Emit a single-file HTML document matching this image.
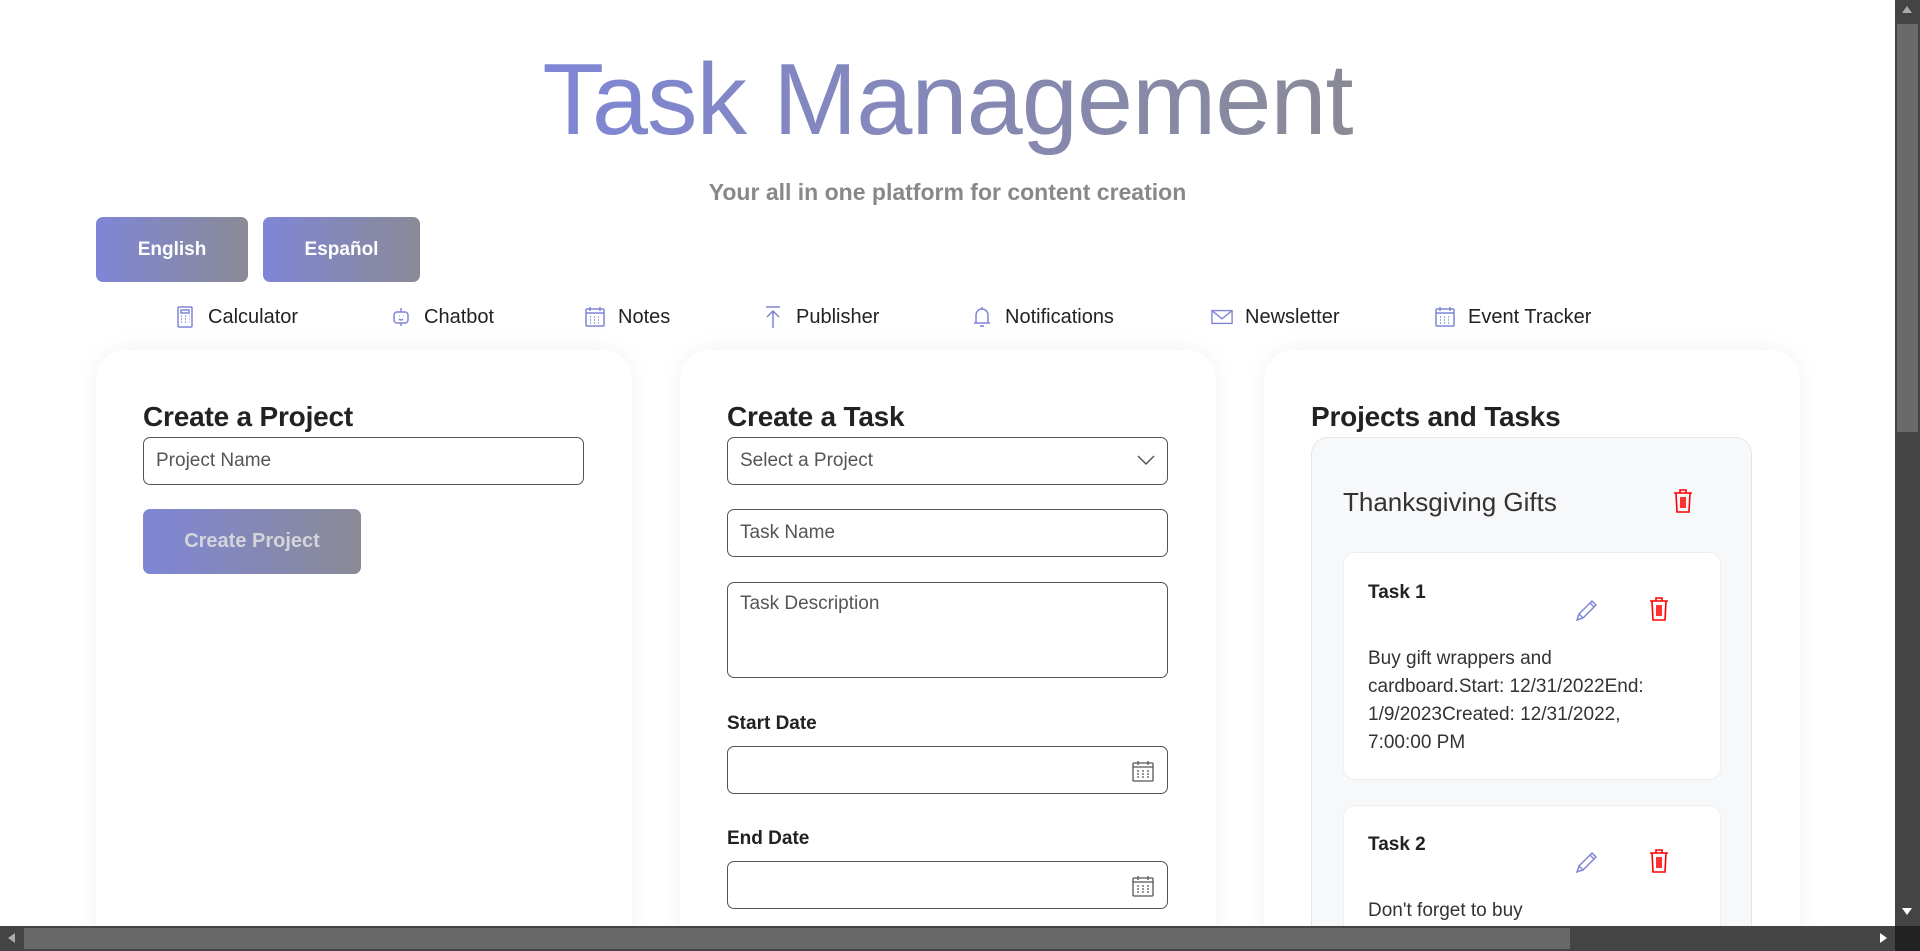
<!DOCTYPE html>
<html><head><meta charset="utf-8"><style>
*{box-sizing:border-box;margin:0;padding:0}
html,body{width:1920px;height:951px;overflow:hidden;background:#fff;font-family:"Liberation Sans",sans-serif;color:#222}
#wrap{position:relative;width:1920px;height:951px;overflow:hidden}
.abs{position:absolute}
h1{position:absolute;left:0;width:1895px;top:40px;text-align:center;font-size:101px;font-weight:400;line-height:120px;letter-spacing:-1px}
h1 span{background:linear-gradient(90deg,#7f86d6,#8a8a96);-webkit-background-clip:text;background-clip:text;color:transparent}
.sub{position:absolute;left:0;width:1895px;top:179px;text-align:center;font-size:23px;font-weight:bold;color:#888}
.btn{position:absolute;background:linear-gradient(90deg,#7f86d6,#8a8a96);border-radius:7px;color:#fff;font-weight:bold;font-size:19px;display:flex;align-items:center;justify-content:center}
.nav{position:absolute;top:305px;font-size:20px;color:#222;display:flex;align-items:center;gap:12px;height:24px}
.nav svg{width:22px;height:24px}
.card{position:absolute;top:350px;width:536px;height:640px;background:#fff;border-radius:30px;box-shadow:0 0 24px rgba(0,0,0,.06)}
.h2{position:absolute;font-size:28px;font-weight:bold;color:#222;letter-spacing:-.2px}
.inp{position:absolute;border:1px solid #555;border-radius:7px;font-size:19px;color:#555;padding-left:12px;display:flex;align-items:center;background:#fff}
.lbl{position:absolute;font-size:19px;color:#222;font-weight:bold}
.desc{font-size:19px;line-height:28px;color:#333}
</style></head><body><div id="wrap">
<h1><span>Task Management</span></h1>
<div class="sub">Your all in one platform for content creation</div>
<div class="btn" style="left:96px;top:217px;width:152px;height:65px">English</div>
<div class="btn" style="left:263px;top:217px;width:157px;height:65px">Español</div>

<div class="nav" style="left:174px"><svg viewBox="0 0 22 24" fill="none" stroke="#7f86d6" stroke-width="1.5"><rect x="4" y="2" width="14" height="20" rx="1"/><rect x="7" y="5" width="8" height="3"/><path d="M7 11h1M11 11h1M15 11h0.5M7 14h1M11 14h1M15 14h.5M7 17h1M11 17h1M15 17h.5"/></svg>Calculator</div>
<div class="nav" style="left:390px"><svg viewBox="0 0 22 24" fill="none" stroke="#7f86d6" stroke-width="1.5"><rect x="4" y="7" width="14" height="11" rx="3"/><path d="M11 3v4M9 11h.5M13 11h.5M9 14q2 2 4 0M11 18v3"/></svg>Chatbot</div>
<div class="nav" style="left:584px"><svg viewBox="0 0 22 24" fill="none" stroke="#7f86d6" stroke-width="1.5"><rect x="2" y="4" width="18" height="17" rx="1"/><path d="M2 8h18M6 2v4M16 2v4M6 12h1M10 12h1M14 12h1M6 15h1M10 15h1M14 15h1M6 18h1M10 18h1M14 18h1"/></svg>Notes</div>
<div class="nav" style="left:762px"><svg viewBox="0 0 22 24" fill="none" stroke="#7f86d6" stroke-width="1.5"><path d="M4 2h14M11 6v17M5 12l6-6 6 6"/></svg>Publisher</div>
<div class="nav" style="left:971px"><svg viewBox="0 0 22 24" fill="none" stroke="#7f86d6" stroke-width="1.5"><path d="M5 18V10a6 6 0 0 1 12 0v8M3 18h16M9 21h4M11 2v2"/></svg>Notifications</div>
<div class="nav" style="left:1211px"><svg viewBox="0 0 24 24" fill="none" stroke="#7f86d6" stroke-width="1.5"><rect x="1" y="5" width="22" height="14"/><path d="M1 5l11 9 11-9"/></svg>Newsletter</div>
<div class="nav" style="left:1434px"><svg viewBox="0 0 22 24" fill="none" stroke="#7f86d6" stroke-width="1.5"><rect x="2" y="4" width="18" height="17" rx="1"/><path d="M2 8h18M6 2v4M16 2v4M6 12h1M10 12h1M14 12h1M6 15h1M10 15h1M14 15h1M6 18h1M10 18h1M14 18h1"/></svg>Event Tracker</div>

<div class="card" style="left:96px"></div>
<div class="card" style="left:680px"></div>
<div class="card" style="left:1264px"></div>

<div class="h2" style="left:143px;top:401px">Create a Project</div>
<div class="inp" style="left:143px;top:437px;width:441px;height:48px">Project Name</div>
<div class="btn" style="left:143px;top:509px;width:218px;height:65px;color:#d4d4dc;font-size:20px">Create Project</div>

<div class="h2" style="left:727px;top:401px">Create a Task</div>
<div class="inp" style="left:727px;top:437px;width:441px;height:48px">Select a Project
<svg style="position:absolute;right:12px;top:17px" width="18" height="11" viewBox="0 0 18 11" fill="none" stroke="#555" stroke-width="1.5"><path d="M1 1l8 8 8-8"/></svg></div>
<div class="inp" style="left:727px;top:509px;width:441px;height:48px">Task Name</div>
<div class="inp" style="left:727px;top:582px;width:441px;height:96px;align-items:flex-start;padding-top:10px">Task Description</div>
<div class="lbl" style="left:727px;top:713px">Start Date</div>
<div class="inp" style="left:727px;top:746px;width:441px;height:48px"><svg style="position:absolute;right:12px;top:12px" width="24" height="24" viewBox="0 0 24 24" fill="none" stroke="#555" stroke-width="1.3"><rect x="2" y="4" width="20" height="18" rx="1"/><path d="M2 8h20M7 2v4M17 2v4M6 12h2M11 12h2M16 12h2M6 15h2M11 15h2M16 15h2M6 18h2M11 18h2M16 18h2"/></svg></div>
<div class="lbl" style="left:727px;top:828px">End Date</div>
<div class="inp" style="left:727px;top:861px;width:441px;height:48px"><svg style="position:absolute;right:12px;top:12px" width="24" height="24" viewBox="0 0 24 24" fill="none" stroke="#555" stroke-width="1.3"><rect x="2" y="4" width="20" height="18" rx="1"/><path d="M2 8h20M7 2v4M17 2v4M6 12h2M11 12h2M16 12h2M6 15h2M11 15h2M16 15h2M6 18h2M11 18h2M16 18h2"/></svg></div>

<div class="h2" style="left:1311px;top:401px">Projects and Tasks</div>
<div class="abs" style="left:1311px;top:437px;width:441px;height:600px;background:#f7f8fa;border:1px solid #e6e6e9;border-radius:17px"></div>
<div class="abs" style="left:1343px;top:487px;font-size:26px;color:#333">Thanksgiving Gifts</div>
<svg class="abs" style="left:1672px;top:488px" width="22" height="26" viewBox="0 0 22 26" fill="none" stroke="#f00" stroke-width="1.6"><path d="M2 5h18M8 5V2h6v3M4 5l1 19h12l1-19M9 9v11M11 9v11M13 9v11"/></svg>

<div class="abs" style="left:1343px;top:552px;width:378px;height:228px;background:#fff;border:1px solid #eceef0;border-radius:12px"></div>
<div class="abs" style="left:1368px;top:582px;font-size:19px;font-weight:bold;color:#222">Task 1</div>
<svg class="abs" style="left:1574px;top:597px" width="26" height="26" viewBox="0 0 26 26" fill="none" stroke="#7f86d6" stroke-width="1.5"><path d="M3 23l2-6L18 4l4 4L9 21zM5 17l4 4M16 6l4 4"/></svg>
<svg class="abs" style="left:1648px;top:596px" width="22" height="26" viewBox="0 0 22 26" fill="none" stroke="#f00" stroke-width="1.6"><path d="M2 5h18M8 5V2h6v3M4 5l1 19h12l1-19M9 9v11M11 9v11M13 9v11"/></svg>
<div class="abs desc" style="left:1368px;top:645px;width:320px">Buy gift wrappers and cardboard.Start: 12/31/2022End: 1/9/2023Created: 12/31/2022, 7:00:00 PM</div>

<div class="abs" style="left:1343px;top:805px;width:378px;height:200px;background:#fff;border:1px solid #eceef0;border-radius:12px"></div>
<div class="abs" style="left:1368px;top:834px;font-size:19px;font-weight:bold;color:#222">Task 2</div>
<svg class="abs" style="left:1574px;top:849px" width="26" height="26" viewBox="0 0 26 26" fill="none" stroke="#7f86d6" stroke-width="1.5"><path d="M3 23l2-6L18 4l4 4L9 21zM5 17l4 4M16 6l4 4"/></svg>
<svg class="abs" style="left:1648px;top:848px" width="22" height="26" viewBox="0 0 22 26" fill="none" stroke="#f00" stroke-width="1.6"><path d="M2 5h18M8 5V2h6v3M4 5l1 19h12l1-19M9 9v11M11 9v11M13 9v11"/></svg>
<div class="abs desc" style="left:1368px;top:897px">Don't forget to buy</div>

<div class="abs" style="left:1895px;top:0;width:25px;height:951px;background:#444"></div>
<div class="abs" style="left:1897px;top:24px;width:21px;height:408px;background:#6a6a6a"></div>
<div class="abs" style="left:1902px;top:6px;width:0;height:0;border-left:5px solid transparent;border-right:5px solid transparent;border-bottom:7px solid #aaa"></div>
<div class="abs" style="left:0;top:926px;width:1895px;height:25px;background:#444"></div>
<div class="abs" style="left:24px;top:928px;width:1546px;height:21px;background:#686868"></div>
<div class="abs" style="left:8px;top:933px;width:0;height:0;border-top:5px solid transparent;border-bottom:5px solid transparent;border-right:7px solid #aaa"></div>
<div class="abs" style="left:1880px;top:933px;width:0;height:0;border-top:5px solid transparent;border-bottom:5px solid transparent;border-left:7px solid #fff"></div>
<div class="abs" style="left:1902px;top:908px;width:0;height:0;border-left:5px solid transparent;border-right:5px solid transparent;border-top:7px solid #fff"></div>
<div class="abs" style="left:1895px;top:926px;width:25px;height:25px;background:#222"></div>
</div></body></html>
